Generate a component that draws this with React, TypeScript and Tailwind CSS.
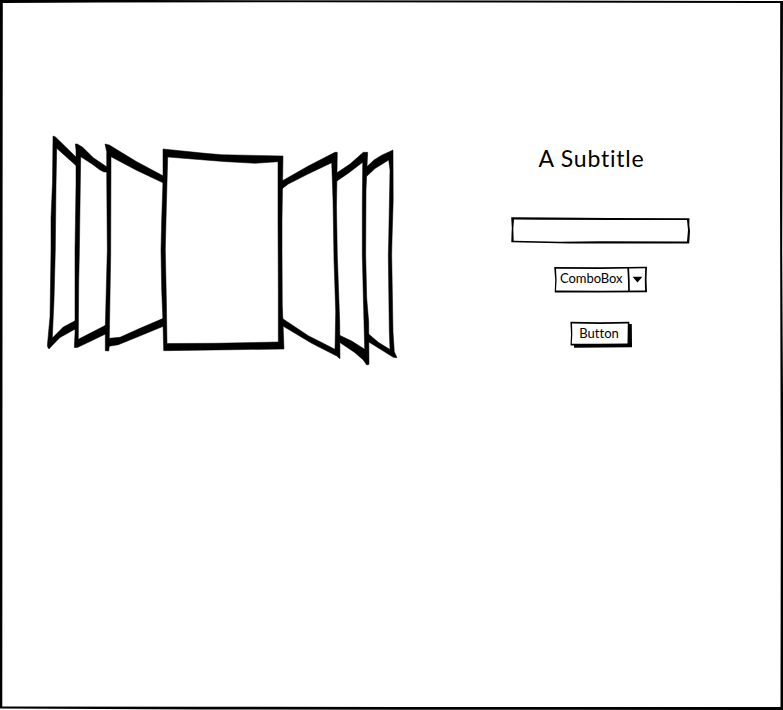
import React from "react";

const panels = [
  // left side, back to front
  "M53 136L55.5 137L77 158L77 166.5L56.7 148.3L56 185L55.3 250L54 300L52.3 338L63.3 327L77 319.8L77 328L60 337.5L51.7 346L49 349L47.5 346.7L47.5 344L50 316.7L51 250L51 218L52.5 182Z",
  "M75.3 144L77.3 144L82.7 147.3L93.3 157.7L107 167L107 172L104 172L100 170L92 164L80.7 156.7L80.3 185L79.3 255L78.7 283L78.3 339.3L107 324.5L107 333.3L90 341.5L77.3 347.5L74.3 347.5L75 333L75 250L76 185L76 150Z",
  "M105 144L109.3 145L136.7 161.7L164 176.3L164 183.3L136 170L111 156.7L110.7 255L109.3 338.3L120 337.3L140 328.3L164 318L164 326L136.7 337.3L118.3 344.7L109.3 346.3L108.7 351L105.3 350.7L105.3 326.7L107.3 250L106.7 175L106.7 151.7Z",
  // right side
  "M282 181L308.3 166L335 152.3L337.3 152.3L336.5 207L337.3 255L339.7 321.7L340 358.7L336.7 356L311.7 343.3L282 325.5L282 318.2L308.3 335.7L335 349.3L335.7 311.7L334 260L333 200L331.7 162.7L308 174L288.3 184L281.7 189Z",
  "M337 172.7L350 164L363.3 152.3L367.7 152.3L367.3 160L366 190L365.7 255L366.7 298L368.7 321.7L369 364.3L366.7 365L363.3 360L355 352.7L339.5 342.3L339 335L351.7 341L364.7 349.3L363.7 311.7L362.3 255L362.3 206.7L362.7 162.3L348.3 173.3L337 180.9Z",
  "M366.5 167L374 160L381.7 155.2L393 150L393.2 200L392 240L391.7 255L393 331.7L394.3 351.7L397 357.7L393.3 357.3L381.7 350L368 341.5L368 333.5L378.3 342.3L390 349.5L389.3 331.7L388.3 255L388.7 240L390 170L388.7 160L375 168.6L366.5 176.5Z",
  // centre
  "M163 149L205 153.3L221.7 154.7L283 156L282 220L282 250L282.3 305L283 323L284 349L231.7 349.7L163.7 350.7L163 323L161.7 290L161 250L161.7 220L163 180ZM167.7 157L166 220L165.3 250L166.3 297L167 343.5L215 343.3L278.3 342L278.3 290L278 220L278 161.7L255 163.3L223.3 161.5Z",
];

function Carousel() {
  return (
    <svg viewBox="46 134 354 234" className="mt-[134px] ml-[46px] h-[234px] w-[354px] shrink-0" aria-hidden="true">
      {panels.map((d) => (
        <path key={d} d={d} fill="#000" fillRule="evenodd" stroke="#000" strokeWidth="0.5" />
      ))}
    </svg>
  );
}

function Sketch({ children, box }: { children: React.ReactNode; box: string }) {
  return (
    <svg viewBox={box} className="pointer-events-none absolute inset-0 h-full w-full" aria-hidden="true">
      {children}
    </svg>
  );
}

export default function App() {
  return (
    <main className="relative flex h-[710px] w-[783px] items-start overflow-hidden bg-white font-['Lato','Open_Sans',sans-serif] text-black">
      <Sketch box="0 0 783 710">
        <path d="M0 0L140 0L783 1L782.2 250L783 400L783 710L400 709.7L200 709.5L0 708.5ZM2.8 3L2.5 300L2.3 706.5L200 706.8L400 706.9L780.5 707L780.8 500L780 190L780.2 3L300 2.2L100 2.6Z" fill="#000" fillRule="evenodd" />
      </Sketch>

      <Carousel />

      <section className="mt-[142px] ml-[110px] flex w-[181px] flex-col items-center">
        <h1 className="mr-[18px] h-[74px] w-max text-[23px] leading-[32px] tracking-[0.8px]">A Subtitle</h1>

        <div className="relative h-7 w-full">
          <Sketch box="510 216 181 28">
            <path d="M511.2 217.3L550 217.5L610 218L689.5 218.3L689.3 225L690 231L689.2 243.5L570 243.6L511.3 242.3L511.5 235L511.8 228ZM514 219.5L513.3 229L513.7 240.8L560 241.7L600 241.2L687 241.4L688 230L687 220L610 220L540 219.7Z" fill="#000" fillRule="evenodd" />
          </Sketch>
          <input aria-label="Text" className="relative h-full w-full bg-transparent px-2 text-[13px] outline-none" />
        </div>

        <button type="button" className="relative mt-[22px] flex h-7 w-[95px] pl-[7px] text-left text-[13px] leading-[25px]">
          <Sketch box="553 266 95 28">
            <path d="M554.2 267L600 267.3L647 266.7L646.5 279L647 292.3L600 292.4L554.7 292.5L555.2 280ZM556 268.8L556.6 280L556 290.5L600 290.8L645 290.5L644.8 279L645.2 268.3L600 269Z" fill="#000" fillRule="evenodd" />
            <path d="M628.2 268L628.8 280L629 291.5" fill="none" stroke="#000" strokeWidth="1.7" />
            <path d="M632.6 276.8L642.4 276.8L637.5 282.4Z" />
          </Sketch>
          <span className="tracking-[-0.05px]">ComboBox</span>
        </button>

        <button type="button" className="relative mt-[27px] h-7 w-16 pr-[3px] text-center text-[13px] leading-[24px]">
          <Sketch box="569 321 64 28">
            <path d="M574 345L574 347.7L632 347.3L631.8 324L629 324L628.5 344Z" />
            <path d="M570.4 321.8L600 322.3L629.3 321.8L629.4 345.3L600 345.6L570.5 345.6L571 334ZM572 323.5L572.3 334L571.8 343.8L600 343.8L627.5 343.5L627.8 323.6L600 324Z" fillRule="evenodd" />
          </Sketch>
          <span className="mb-[3px] inline-block align-top leading-[23px] tracking-[0.05px]">Button</span>
        </button>
      </section>
    </main>
  );
}
